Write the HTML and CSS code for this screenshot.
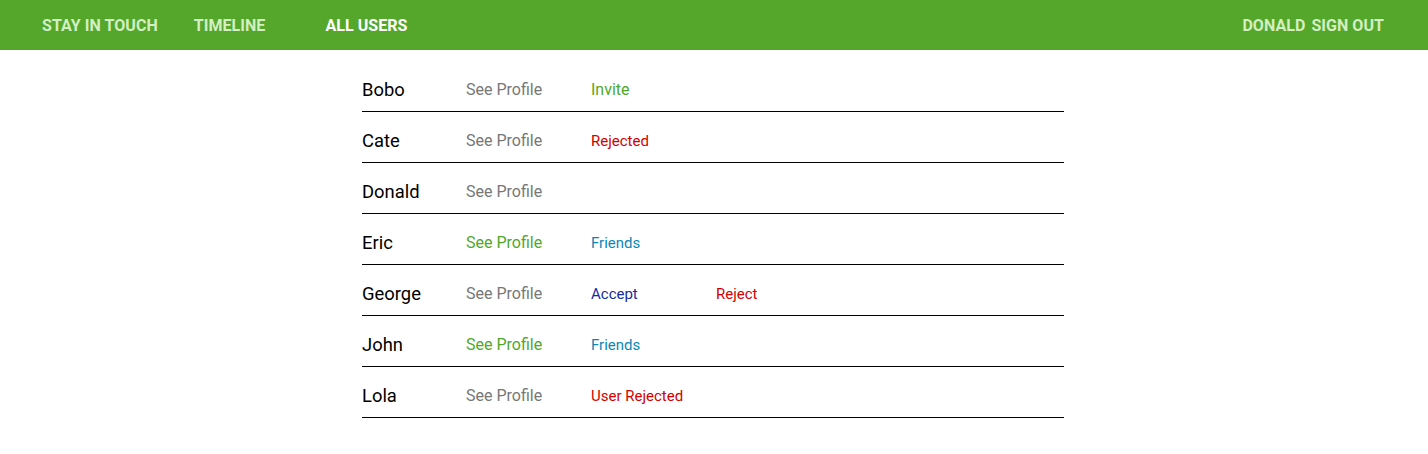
FILE: index.html
```html
<!DOCTYPE html>
<html>
<head>
<meta charset="utf-8">
<link rel="stylesheet" href="styles.css">
</head>
<body>
<header class="topbar">
  <nav class="nav-left">
    <a class="nav-link">Stay in touch</a>
    <a class="nav-link nav-timeline">Timeline</a>
    <a class="nav-link nav-active">All users</a>
  </nav>
  <nav class="nav-right">
    <a class="nav-link">Donald</a>
    <a class="nav-link nav-signout">Sign out</a>
  </nav>
</header>
<main class="users">
  <div class="row"><span class="name">Bobo</span><a class="profile">See Profile</a><a class="status invite">Invite</a></div>
  <div class="row"><span class="name">Cate</span><a class="profile">See Profile</a><span class="status red">Rejected</span></div>
  <div class="row"><span class="name">Donald</span><a class="profile">See Profile</a></div>
  <div class="row"><span class="name">Eric</span><a class="profile friend">See Profile</a><span class="status blue">Friends</span></div>
  <div class="row"><span class="name">George</span><a class="profile">See Profile</a><a class="status navy">Accept</a><a class="status red">Reject</a></div>
  <div class="row"><span class="name">John</span><a class="profile friend">See Profile</a><span class="status blue">Friends</span></div>
  <div class="row"><span class="name">Lola</span><a class="profile">See Profile</a><span class="status red">User Rejected</span></div>
</main>
</body>
</html>
```
FILE: styles.css
```css
html, body {
  margin: 0;
  padding: 0;
  background: #fff;
  font-family: Roboto, "Liberation Sans", sans-serif;
}
.topbar {
  height: 50px;
  background: #54a72a;
  display: flex;
  align-items: center;
  justify-content: space-between;
  padding: 0 44px 0 42px;
}
.nav-left, .nav-right {
  display: flex;
  align-items: center;
}
.nav-link {
  font-size: 16px;
  font-weight: 700;
  text-transform: uppercase;
  color: #d3efc3;
  letter-spacing: 0.05px;
}
.nav-timeline { margin-left: 36px; }
.nav-active { margin-left: 60px; color: #ffffff; }
.nav-signout { margin-left: 6px; }
.users {
  width: 702px;
  margin: 11px 0 0 calc(50% - 352px);
}
.row {
  height: 51px;
  box-sizing: border-box;
  border-bottom: 1px solid #000;
  padding-top: 6px;
  display: flex;
  align-items: center;
}
.name {
  width: 104px;
  font-size: 18.4px;
  color: #000;
}
.profile {
  width: 125px;
  font-size: 16px;
  color: #777777;
}
.profile.friend { color: #4fa82a; }
.status {
  width: 125px;
  font-size: 15px;
  padding-top: 1px;
}
.invite { font-size: 16px; color: #4fa82a; padding-top: 0; }
.red { color: #d40000; }
.blue { color: #0b87b6; }
.navy { color: #1a2aa6; }
```
